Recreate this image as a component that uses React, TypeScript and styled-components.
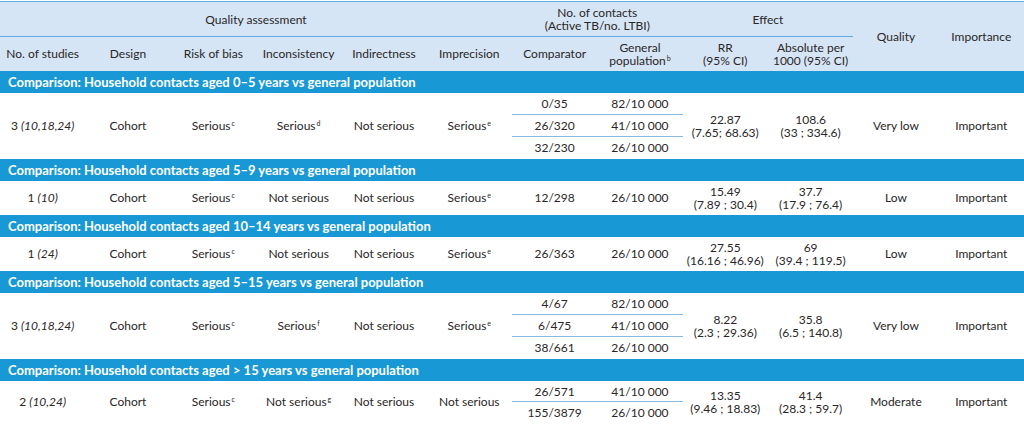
import React from 'react';
import styled, { createGlobalStyle } from 'styled-components';

const GlobalStyle = createGlobalStyle`
  body {
    margin: 0;
    background: #ffffff;
  }
`;

const Page = styled.div`
  width: 1024px;
  height: 424px;
  padding-top: 1px;
  box-sizing: border-box;
  overflow: hidden;
`;

const Table = styled.table`
  width: 1024px;
  table-layout: fixed;
  border-collapse: collapse;
  font-family: Lato, 'Liberation Sans', sans-serif;
  font-size: 12px;
  line-height: 13px;
  color: #2a2627;
  border-top: 1.5px solid #5fabe0;
  border-bottom: 1px solid #a9cdea;
`;

const Head = styled.thead`
  background: #d6e5f5;
`;

const HeadCell = styled.th<{ $line?: boolean; $h?: number }>`
  font-weight: 400;
  text-align: center;
  vertical-align: middle;
  padding: 0 4px;
  height: ${({ $h }) => $h ?? 33}px;
  border-bottom: 1px solid ${({ $line }) => ($line ? '#5fabe0' : 'transparent')};
`;

const BandCell = styled.td`
  background: #1898d5;
  color: #ffffff;
  font-weight: 700;
  font-size: 13px;
  height: 22px;
  padding: 0 8px;
  text-align: left;
  vertical-align: middle;
  white-space: nowrap;
`;

const Cell = styled.td<{ $sub?: boolean; $h?: number }>`
  text-align: center;
  vertical-align: middle;
  padding: 0 4px;
  height: ${({ $h }) => ($h ? `${$h}px` : 'auto')};
  white-space: nowrap;
  border-bottom: 1px solid ${({ $sub }) => ($sub ? '#8bb8de' : 'transparent')};
`;

const Sup = styled.span`
  font-size: 7px;
  line-height: 0;
  position: relative;
  top: -4px;
  margin-left: 1px;
`;

const Refs = styled.i`
  font-style: italic;
`;

type Group = {
  title: string;
  studies: string;
  refs: string;
  risk: [string, string?];
  inconsistency: [string, string?];
  indirectness: [string, string?];
  imprecision: [string, string?];
  contacts: [string, string][];
  rr: [string, string];
  abs: [string, string];
  quality: string;
};

const groups: Group[] = [
  {
    title: 'Comparison: Household contacts aged 0\u20135 years vs general population',
    studies: '3',
    refs: '10,18,24',
    risk: ['Serious', 'c'],
    inconsistency: ['Serious', 'd'],
    indirectness: ['Not serious'],
    imprecision: ['Serious', 'e'],
    contacts: [
      ['0/35', '82/10 000'],
      ['26/320', '41/10 000'],
      ['32/230', '26/10 000'],
    ],
    rr: ['22.87', '(7.65; 68.63)'],
    abs: ['108.6', '(33 ; 334.6)'],
    quality: 'Very low',
  },
  {
    title: 'Comparison: Household contacts aged 5\u20139 years vs general population',
    studies: '1',
    refs: '10',
    risk: ['Serious', 'c'],
    inconsistency: ['Not serious'],
    indirectness: ['Not serious'],
    imprecision: ['Serious', 'e'],
    contacts: [['12/298', '26/10 000']],
    rr: ['15.49', '(7.89 ; 30.4)'],
    abs: ['37.7', '(17.9 ; 76.4)'],
    quality: 'Low',
  },
  {
    title: 'Comparison: Household contacts aged 10\u201314 years vs general population',
    studies: '1',
    refs: '24',
    risk: ['Serious', 'c'],
    inconsistency: ['Not serious'],
    indirectness: ['Not serious'],
    imprecision: ['Serious', 'e'],
    contacts: [['26/363', '26/10 000']],
    rr: ['27.55', '(16.16 ; 46.96)'],
    abs: ['69', '(39.4 ; 119.5)'],
    quality: 'Low',
  },
  {
    title: 'Comparison: Household contacts aged 5\u201315 years vs general population',
    studies: '3',
    refs: '10,18,24',
    risk: ['Serious', 'c'],
    inconsistency: ['Serious', 'f'],
    indirectness: ['Not serious'],
    imprecision: ['Serious', 'e'],
    contacts: [
      ['4/67', '82/10 000'],
      ['6/475', '41/10 000'],
      ['38/661', '26/10 000'],
    ],
    rr: ['8.22', '(2.3 ; 29.36)'],
    abs: ['35.8', '(6.5 ; 140.8)'],
    quality: 'Very low',
  },
  {
    title: 'Comparison: Household contacts aged > 15 years vs general population',
    studies: '2',
    refs: '10,24',
    risk: ['Serious', 'c'],
    inconsistency: ['Not serious', 'g'],
    indirectness: ['Not serious'],
    imprecision: ['Not serious'],
    contacts: [
      ['26/571', '41/10 000'],
      ['155/3879', '26/10 000'],
    ],
    rr: ['13.35', '(9.46 ; 18.83)'],
    abs: ['41.4', '(28.3 ; 59.7)'],
    quality: 'Moderate',
  },
];

function Rated({ value }: { value: [string, string?] }) {
  return (
    <>
      {value[0]}
      {value[1] && <Sup>{value[1]}</Sup>}
    </>
  );
}

function GroupRows({ group }: { group: Group }) {
  const n = group.contacts.length;
  const subH = n === 1 ? 33 : n === 2 ? 20 : 21;
  return (
    <>
      <tr>
        <BandCell colSpan={12}>{group.title}</BandCell>
      </tr>
      {group.contacts.map(([comp, gen], i) => {
        const sub = i < n - 1;
        return (
          <tr key={i}>
            {i === 0 && (
              <>
                <Cell rowSpan={n}>
                  {group.studies} <Refs>({group.refs})</Refs>
                </Cell>
                <Cell rowSpan={n}>Cohort</Cell>
                <Cell rowSpan={n}>
                  <Rated value={group.risk} />
                </Cell>
                <Cell rowSpan={n}>
                  <Rated value={group.inconsistency} />
                </Cell>
                <Cell rowSpan={n}>
                  <Rated value={group.indirectness} />
                </Cell>
                <Cell rowSpan={n}>
                  <Rated value={group.imprecision} />
                </Cell>
              </>
            )}
            <Cell $sub={sub} $h={subH}>{comp}</Cell>
            <Cell $sub={sub} $h={subH}>{gen}</Cell>
            {i === 0 && (
              <>
                <Cell rowSpan={n}>
                  {group.rr[0]}
                  <br />
                  {group.rr[1]}
                </Cell>
                <Cell rowSpan={n}>
                  {group.abs[0]}
                  <br />
                  {group.abs[1]}
                </Cell>
                <Cell rowSpan={n}>{group.quality}</Cell>
                <Cell rowSpan={n}>Important</Cell>
              </>
            )}
          </tr>
        );
      })}
    </>
  );
}

export default function App() {
  return (
    <Page>
      <GlobalStyle />
      <Table>
        <colgroup>
          {Array.from({ length: 12 }).map((_, i) => (
            <col key={i} style={{ width: `${100 / 12}%` }} />
          ))}
        </colgroup>
        <Head>
          <tr>
            <HeadCell colSpan={6} $line $h={34}>
              Quality assessment
            </HeadCell>
            <HeadCell colSpan={2} $line $h={34}>
              No. of contacts
              <br />
              (Active TB/no. LTBI)
            </HeadCell>
            <HeadCell colSpan={2} $line $h={34}>
              Effect
            </HeadCell>
            <HeadCell rowSpan={2}>Quality</HeadCell>
            <HeadCell rowSpan={2}>Importance</HeadCell>
          </tr>
          <tr>
            <HeadCell>No. of studies</HeadCell>
            <HeadCell>Design</HeadCell>
            <HeadCell>Risk of bias</HeadCell>
            <HeadCell>Inconsistency</HeadCell>
            <HeadCell>Indirectness</HeadCell>
            <HeadCell>Imprecision</HeadCell>
            <HeadCell>Comparator</HeadCell>
            <HeadCell>
              General
              <br />
              population<Sup>b</Sup>
            </HeadCell>
            <HeadCell>
              RR
              <br />
              (95% CI)
            </HeadCell>
            <HeadCell>
              Absolute per
              <br />
              1000 (95% CI)
            </HeadCell>
          </tr>
        </Head>
        <tbody>
          {groups.map((g) => (
            <GroupRows key={g.title} group={g} />
          ))}
        </tbody>
      </Table>
    </Page>
  );
}
